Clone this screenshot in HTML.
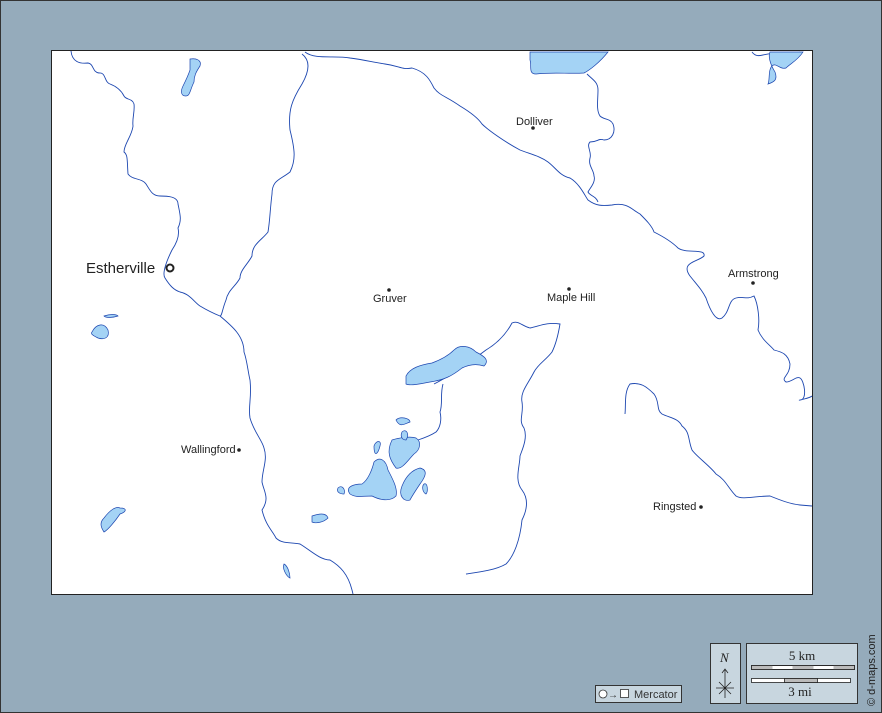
<!DOCTYPE html>
<html><head><meta charset="utf-8"><style>
html,body{margin:0;padding:0;}
body{width:882px;height:713px;overflow:hidden;background:#95abbb;font-family:"Liberation Sans",sans-serif;}
svg{display:block}
</style></head><body>
<svg width="882" height="713" viewBox="0 0 882 713" xmlns="http://www.w3.org/2000/svg">
<rect x="0.5" y="0.5" width="881" height="712" fill="#95abbb" stroke="#333" stroke-width="1"/>
<rect x="51.5" y="50.5" width="761" height="544" fill="#fff" stroke="#222" stroke-width="1"/>
<g fill="none" stroke="#1d47b0" stroke-width="0.9">
<path d="M71,51 C72,62 80,64 88,63 C94,64 92,72 99,73 C106,72 104,82 110,84 C118,87 122,92 124,96 C126,100 132,98 134,104 C135,112 132,118 133,126 C132,136 124,144 124,152 C128,155 127,160 128,174 C132,180 142,178 146,184 C150,190 152,196 160,196 C166,196 178,196 178,204 C180,214 182,220 178,228 C180,236 176,244 172,250 C166,262 162,274 165,278 C170,286 174,290 180,292 C190,294 194,302 200,306 C210,312 215,314 220,316 C232,326 244,336 244,352 C247,360 248,372 250,380 C252,398 248,406 250,418 C254,432 262,440 264,448 C268,460 262,470 262,482 C264,492 270,498 262,510 C266,526 272,530 276,538 C282,544 290,542 300,544 C310,550 320,560 330,560 C340,566 348,574 352,590 L353,594"/>
<path d="M302,54 C310,60 310,70 302,84 C292,100 288,110 290,130 C295,150 296,160 290,172 C280,180 272,180 272,194 C270,210 270,220 268,232 C262,240 252,244 252,256 C248,264 240,270 240,278 C236,286 228,290 226,300 C222,310 222,316 220,316"/>
<path d="M305,52 C315,60 335,55 350,58 C365,60 372,62 385,64 C400,66 402,70 412,68 C426,72 430,80 434,88 C440,96 446,96 460,106 C470,112 478,118 482,124 C488,130 505,142 520,150 C530,154 540,156 548,162 C556,168 560,176 570,178 C580,184 585,196 588,200 C596,206 602,206 612,205 C628,202 632,210 640,214 C646,220 652,226 654,232 C662,236 672,242 678,248 C686,254 706,248 704,256 C698,262 680,262 690,276 C698,286 702,290 706,298 C710,310 716,322 722,318 C730,312 728,300 736,298 C744,296 746,300 754,296 C758,304 760,320 758,330 C762,340 770,345 774,350 C782,352 788,354 790,364 C790,376 780,378 786,382 C792,382 796,376 800,378 C804,380 808,400 800,400 C796,401 810,398 812,396"/>
<path d="M587,74 C593,80 598,82 598,90 C598,100 596,110 600,116 C604,120 610,118 613,124 C616,132 612,140 604,140 C598,138 598,142 590,142 C586,146 592,152 590,158 C588,166 594,170 594,176 C596,182 590,188 588,192 C590,196 596,196 598,202"/>
<path d="M434,384 C450,376 470,362 486,350 C496,344 505,336 512,323 C518,320 522,326 530,328 C540,326 546,322 560,324 C558,336 556,344 552,352 C546,360 538,364 534,372 C528,384 520,392 522,402 C524,414 518,420 524,428 C528,438 522,450 520,456 C520,466 514,480 522,490 C528,498 528,508 522,520 C520,540 514,556 506,564 C496,570 480,572 466,574"/>
<path d="M443,384 C440,394 443,404 440,412 C442,420 440,428 436,432 C430,436 424,438 418,440"/>
<path d="M625,414 C626,404 624,392 630,384 C640,382 646,386 654,394 C660,402 656,410 662,414 C670,418 678,418 682,426 C690,432 688,440 692,450 C696,456 710,466 716,474 C726,480 728,488 736,496 C742,500 756,496 770,496 C780,500 790,504 800,505 L812,506"/>
<path d="M752,52 C758,60 764,52 776,54 C786,58 794,58 800,52"/>
</g>
<g fill="#a4d3f5" stroke="#1d47b0" stroke-width="0.7">
<path d="M530,52 L608,52 C600,62 590,70 584,73 C570,74 552,72 536,74 C528,74 532,66 530,60 Z"/>
<path d="M770,52 L803,52 C798,60 790,64 786,68 C780,70 776,62 772,66 C768,70 770,80 768,84 C774,82 778,80 775,72 C770,64 768,56 770,52 Z"/>
<path d="M190,59 C196,58 202,60 200,66 C196,72 194,76 194,82 C190,90 190,96 186,96 C180,96 181,90 183,86 C186,80 188,76 190,70 Z"/>
<path d="M406,376 C410,368 420,365 432,363 C440,360 448,356 454,350 C460,344 470,346 476,352 C484,356 490,360 484,366 C478,364 470,364 462,368 C452,376 444,380 430,382 C420,384 410,386 406,384 Z"/>
<path d="M392,440 C398,438 410,436 416,438 C422,442 420,450 414,454 C408,460 402,470 396,468 C390,460 386,452 392,440 Z"/>
<path d="M374,462 C380,456 386,460 388,470 C392,478 398,488 396,496 C390,502 380,500 372,496 C362,496 356,498 350,494 C344,486 356,484 362,484 C368,480 372,470 374,462 Z"/>
<path d="M402,486 C406,476 412,470 420,468 C428,470 426,476 420,484 C416,490 412,496 410,500 C404,502 398,496 402,486 Z"/>
<path d="M374,446 C376,440 382,440 380,446 C378,454 374,458 374,446 Z"/>
<path d="M396,420 C400,416 410,418 410,422 C404,424 400,428 396,420 Z"/>
<path d="M402,432 C406,428 410,434 406,440 C402,440 400,436 402,432 Z"/>
<path d="M424,484 C428,482 428,492 426,494 C422,492 422,486 424,484 Z"/>
<path d="M312,516 C318,514 326,512 328,518 C324,522 316,524 312,522 Z"/>
<path d="M338,488 C342,484 346,490 344,494 C340,494 336,492 338,488 Z"/>
<path d="M104,518 C110,510 116,506 120,508 C128,508 126,512 120,514 C116,520 108,530 104,532 C100,526 100,522 104,518 Z"/>
<path d="M92,332 C96,324 104,322 108,330 C110,338 104,340 98,338 C94,336 90,334 92,332 Z"/>
<path d="M104,316 C110,314 116,314 118,316 C112,318 106,318 104,316 Z"/>
<path d="M284,564 C288,566 290,574 290,578 C286,576 282,568 284,564 Z"/>
</g>
<g fill="#222" font-size="11" font-family="Liberation Sans,sans-serif">
<text x="516" y="125">Dolliver</text><circle cx="533" cy="128" r="1.8"/>
<text x="728" y="277">Armstrong</text><circle cx="753" cy="283" r="1.8"/>
<text x="547" y="301">Maple Hill</text><circle cx="569" cy="289" r="1.8"/>
<text x="373" y="302">Gruver</text><circle cx="389" cy="290" r="1.8"/>
<text x="181" y="453">Wallingford</text><circle cx="239" cy="450" r="1.8"/>
<text x="653" y="510">Ringsted</text><circle cx="701" cy="507" r="1.8"/>
<text x="86" y="273" font-size="15">Estherville</text>
</g>
<circle cx="170" cy="268" r="3.5" fill="#fff" stroke="#222" stroke-width="2"/>
<rect x="595.5" y="685.5" width="86" height="17" fill="#c8d6df" stroke="#333"/>
<circle cx="603" cy="694" r="4" fill="#fff" stroke="#333" stroke-width="0.8"/>
<text x="608" y="698" font-size="10" fill="#333">→</text>
<rect x="620.5" y="689.5" width="8" height="8" fill="#fff" stroke="#333" stroke-width="0.8"/>
<text x="634" y="698" font-size="11" fill="#333">Mercator</text>
<rect x="710.5" y="643.5" width="30" height="60" fill="#c8d6df" stroke="#333"/>
<text x="720" y="662" font-size="13" font-style="italic" font-family="Liberation Serif,serif" fill="#222">N</text>
<path d="M725,670 L725,698 M722,673 L725,669 L728,673 M716,688 L734,688 M719,682 L731,694 M731,682 L719,694" stroke="#222" stroke-width="0.8" fill="none"/>
<rect x="746.5" y="643.5" width="111" height="60" fill="#c8d6df" stroke="#333"/>
<text x="802" y="660" font-size="13" text-anchor="middle" font-family="Liberation Serif,serif" fill="#222">5 km</text>
<rect x="751.5" y="665.5" width="103" height="4" fill="#fff" stroke="#222" stroke-width="0.8"/>
<rect x="751.5" y="665.5" width="21" height="4" fill="#bbb"/>
<rect x="792.5" y="665.5" width="21" height="4" fill="#bbb"/>
<rect x="833.5" y="665.5" width="21" height="4" fill="#bbb"/>
<rect x="751.5" y="665.5" width="103" height="4" fill="none" stroke="#222" stroke-width="0.8"/>
<rect x="751.5" y="678.5" width="99" height="4" fill="#fff" stroke="#222" stroke-width="0.8"/>
<rect x="784.5" y="678.5" width="33" height="4" fill="#bbb" stroke="#222" stroke-width="0.8"/>
<text x="800" y="696" font-size="13" text-anchor="middle" font-family="Liberation Serif,serif" fill="#222">3 mi</text>
<text transform="translate(875,706) rotate(-90)" font-size="11" fill="#222">© d-maps.com</text>
</svg>
</body></html>
